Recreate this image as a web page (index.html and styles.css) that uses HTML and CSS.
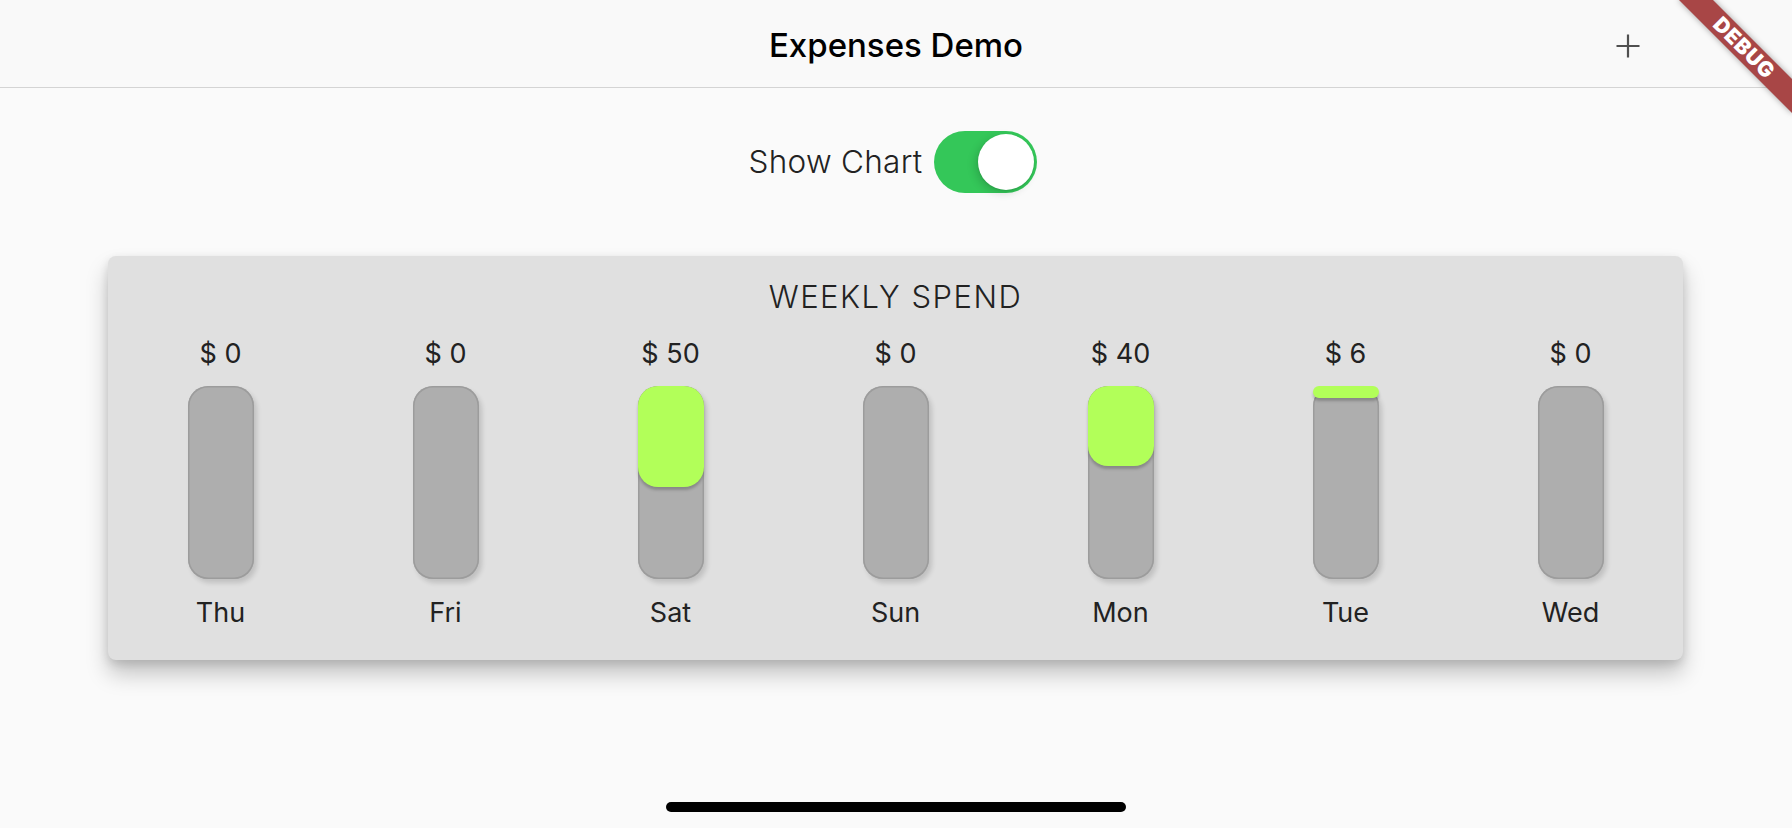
FILE: index.html
```html
<!DOCTYPE html>
<html lang="en">
<head>
<meta charset="utf-8">
<title>Expenses Demo</title>
<link rel="stylesheet" href="styles.css">
</head>
<body>
<header class="navbar">
  <div class="nav-side"></div>
  <h1 class="nav-title">Expenses Demo</h1>
  <div class="nav-side nav-actions">
    <svg class="plus-icon" width="24" height="24" viewBox="0 0 24 24" aria-label="Add">
      <path d="M12 0.5V23.5M0.5 12H23.5" stroke="#505050" stroke-width="2.2" fill="none"/>
    </svg>
  </div>
</header>

<main class="content">
  <div class="toggle-row">
    <span class="toggle-label">Show Chart</span>
    <div class="switch"><div class="switch-thumb"></div></div>
  </div>

  <section class="card">
    <h2 class="card-title">WEEKLY SPEND</h2>
    <div class="chart">
      <div class="col"><span class="amount">$ 0</span><div class="bar"></div><span class="day">Thu</span></div>
      <div class="col"><span class="amount">$ 0</span><div class="bar"></div><span class="day">Fri</span></div>
      <div class="col"><span class="amount">$ 50</span><div class="bar"><div class="fill" style="height:52.1%"></div></div><span class="day">Sat</span></div>
      <div class="col"><span class="amount">$ 0</span><div class="bar"></div><span class="day">Sun</span></div>
      <div class="col"><span class="amount">$ 40</span><div class="bar"><div class="fill" style="height:41.7%"></div></div><span class="day">Mon</span></div>
      <div class="col"><span class="amount">$ 6</span><div class="bar"><div class="fill" style="height:6.25%"></div></div><span class="day">Tue</span></div>
      <div class="col"><span class="amount">$ 0</span><div class="bar"></div><span class="day">Wed</span></div>
    </div>
  </section>
</main>

<div class="debug-banner">DEBUG</div>
<div class="home-indicator"></div>
</body>
</html>
```

FILE: styles.css
```css
html, body {
  margin: 0;
  padding: 0;
  height: 100%;
  overflow: hidden;
}

body {
  position: relative;
  background: #fafafa;
  font-family: Inter, "Noto Sans", "Liberation Sans", sans-serif;
  color: #222;
}

.navbar {
  height: 87px;
  border-bottom: 1px solid #d4d4d4;
  background: #f9f9f9;
  display: grid;
  grid-template-columns: 1fr auto 1fr;
  align-items: center;
}

.nav-title {
  margin: 0;
  font-size: 33px;
  font-weight: 500;
  color: #000;
  letter-spacing: 0;
  line-height: 40px;
  padding-top: 2px;
}

.nav-actions {
  display: flex;
  justify-content: flex-end;
  padding-right: 152px;
  padding-top: 5px;
}

.plus-icon {
  display: block;
}

.content {
  display: flex;
  flex-direction: column;
  align-items: stretch;
}

.toggle-row {
  display: flex;
  justify-content: center;
  align-items: center;
  gap: 11px;
  margin-top: 43px;
  padding-right: 7px;
}

.toggle-label {
  font-size: 31.5px;
  font-weight: 300;
  color: #222;
  line-height: 40px;
  letter-spacing: 0.3px;
}

.switch {
  width: 103px;
  height: 62px;
  border-radius: 31px;
  background: #34c759;
  display: flex;
  justify-content: flex-end;
  align-items: center;
  padding: 0 3px;
  box-sizing: border-box;
}

.switch-thumb {
  width: 56px;
  height: 56px;
  border-radius: 50%;
  background: #fff;
  box-shadow: -3px 3px 8px rgba(0, 0, 0, 0.15), 0 1px 2px rgba(0, 0, 0, 0.1);
}

.card {
  margin: 63px 109px 0 108px;
  background: #e0e0e0;
  border-radius: 8px;
  box-shadow: 0 14px 22px rgba(0, 0, 0, 0.22), 0 4px 10px rgba(0, 0, 0, 0.12);
  padding: 23px 0 30px;
}

.card-title {
  margin: 0;
  text-align: center;
  font-size: 31px;
  font-weight: 300;
  letter-spacing: 1.5px;
  line-height: 36px;
  color: #222;
}

.chart {
  margin-top: 22px;
  display: grid;
  grid-template-columns: repeat(7, 1fr);
}

.col {
  display: flex;
  flex-direction: column;
  align-items: center;
}

.amount,
.day {
  font-size: 27px;
  line-height: 34px;
  color: #222;
  font-weight: 400;
}

.bar {
  margin-top: 15px;
  width: 66px;
  height: 193px;
  border-radius: 20px;
  background: #aeaeae;
  box-shadow: inset 0 0 0 1.5px #9c9c9c, 3px 4px 5px rgba(0, 0, 0, 0.14);
  display: flex;
  flex-direction: column;
}

.fill {
  background: #b2ff59;
  border-radius: 20px;
  box-shadow: 0 3px 3px rgba(0, 0, 0, 0.22);
}

.day {
  margin-top: 17px;
}

.debug-banner {
  position: absolute;
  top: 36px;
  right: -32px;
  width: 160px;
  height: 24px;
  transform: rotate(45deg);
  background: #a84646;
  box-shadow: 0 0 6px rgba(0, 0, 0, 0.35);
  color: #fff;
  font-family: Inter, "Liberation Sans", sans-serif;
  font-weight: 900;
  font-size: 21px;
  line-height: 24px;
  text-align: center;
  letter-spacing: 0.8px;
}

.home-indicator {
  position: absolute;
  left: 666px;
  bottom: 16px;
  width: 460px;
  height: 10px;
  border-radius: 5px;
  background: #000;
}
```
